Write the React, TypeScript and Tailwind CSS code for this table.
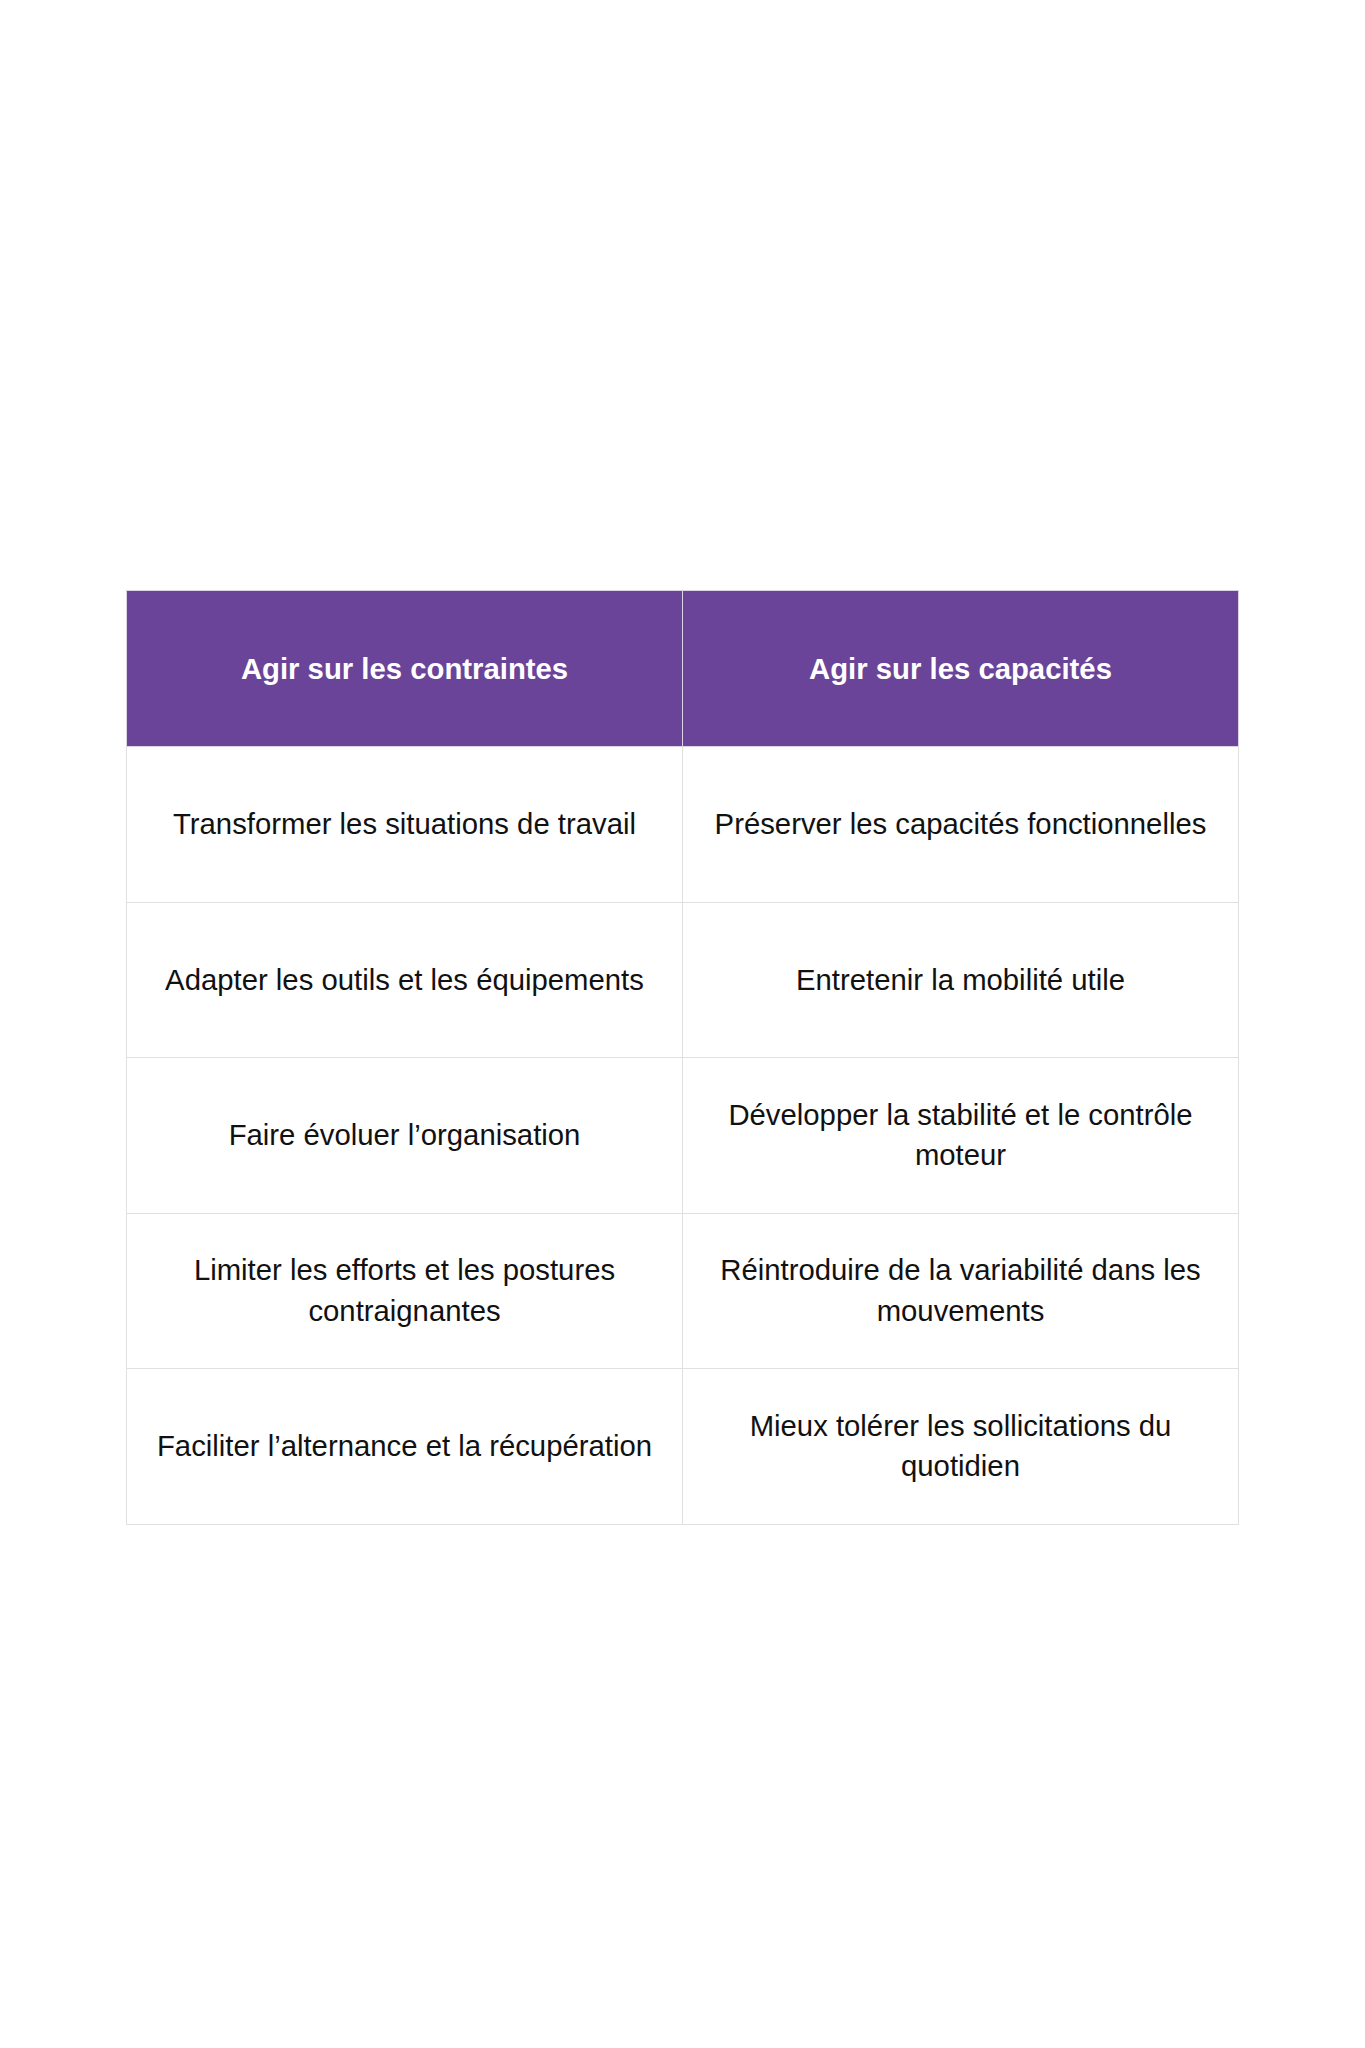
const rows: [string, string][] = [
  ["Transformer les situations de travail", "Préserver les capacités fonctionnelles"],
  ["Adapter les outils et les équipements", "Entretenir la mobilité utile"],
  ["Faire évoluer l’organisation", "Développer la stabilité et le contrôle moteur"],
  ["Limiter les efforts et les postures contraignantes", "Réintroduire de la variabilité dans les mouvements"],
  ["Faciliter l’alternance et la récupération", "Mieux tolérer les sollicitations du quotidien"],
];

export default function App() {
  return (
    <div className="min-h-[2048px] bg-white pt-[590px] font-['Liberation_Sans',Arial,sans-serif]">
      <div className="mx-auto w-[1113px]">
        <table className="w-full table-fixed border-collapse text-center">
          <thead>
            <tr className="h-[156px] bg-[#6a4499]">
              <th className="border border-[#dcd4e6] px-7 text-[29.3px] font-bold text-white">
                Agir sur les contraintes
              </th>
              <th className="border border-[#dcd4e6] px-7 text-[29.3px] font-bold text-white">
                Agir sur les capacités
              </th>
            </tr>
          </thead>
          <tbody>
            {rows.map(([a, b]) => (
              <tr key={a} className="h-[155.5px]">
                <td className="border border-[#e0e0e0] px-7 text-[29.3px] leading-[40.5px] text-[#111]">{a}</td>
                <td className="border border-[#e0e0e0] px-7 text-[29.3px] leading-[40.5px] text-[#111]">{b}</td>
              </tr>
            ))}
          </tbody>
        </table>
      </div>
    </div>
  );
}
